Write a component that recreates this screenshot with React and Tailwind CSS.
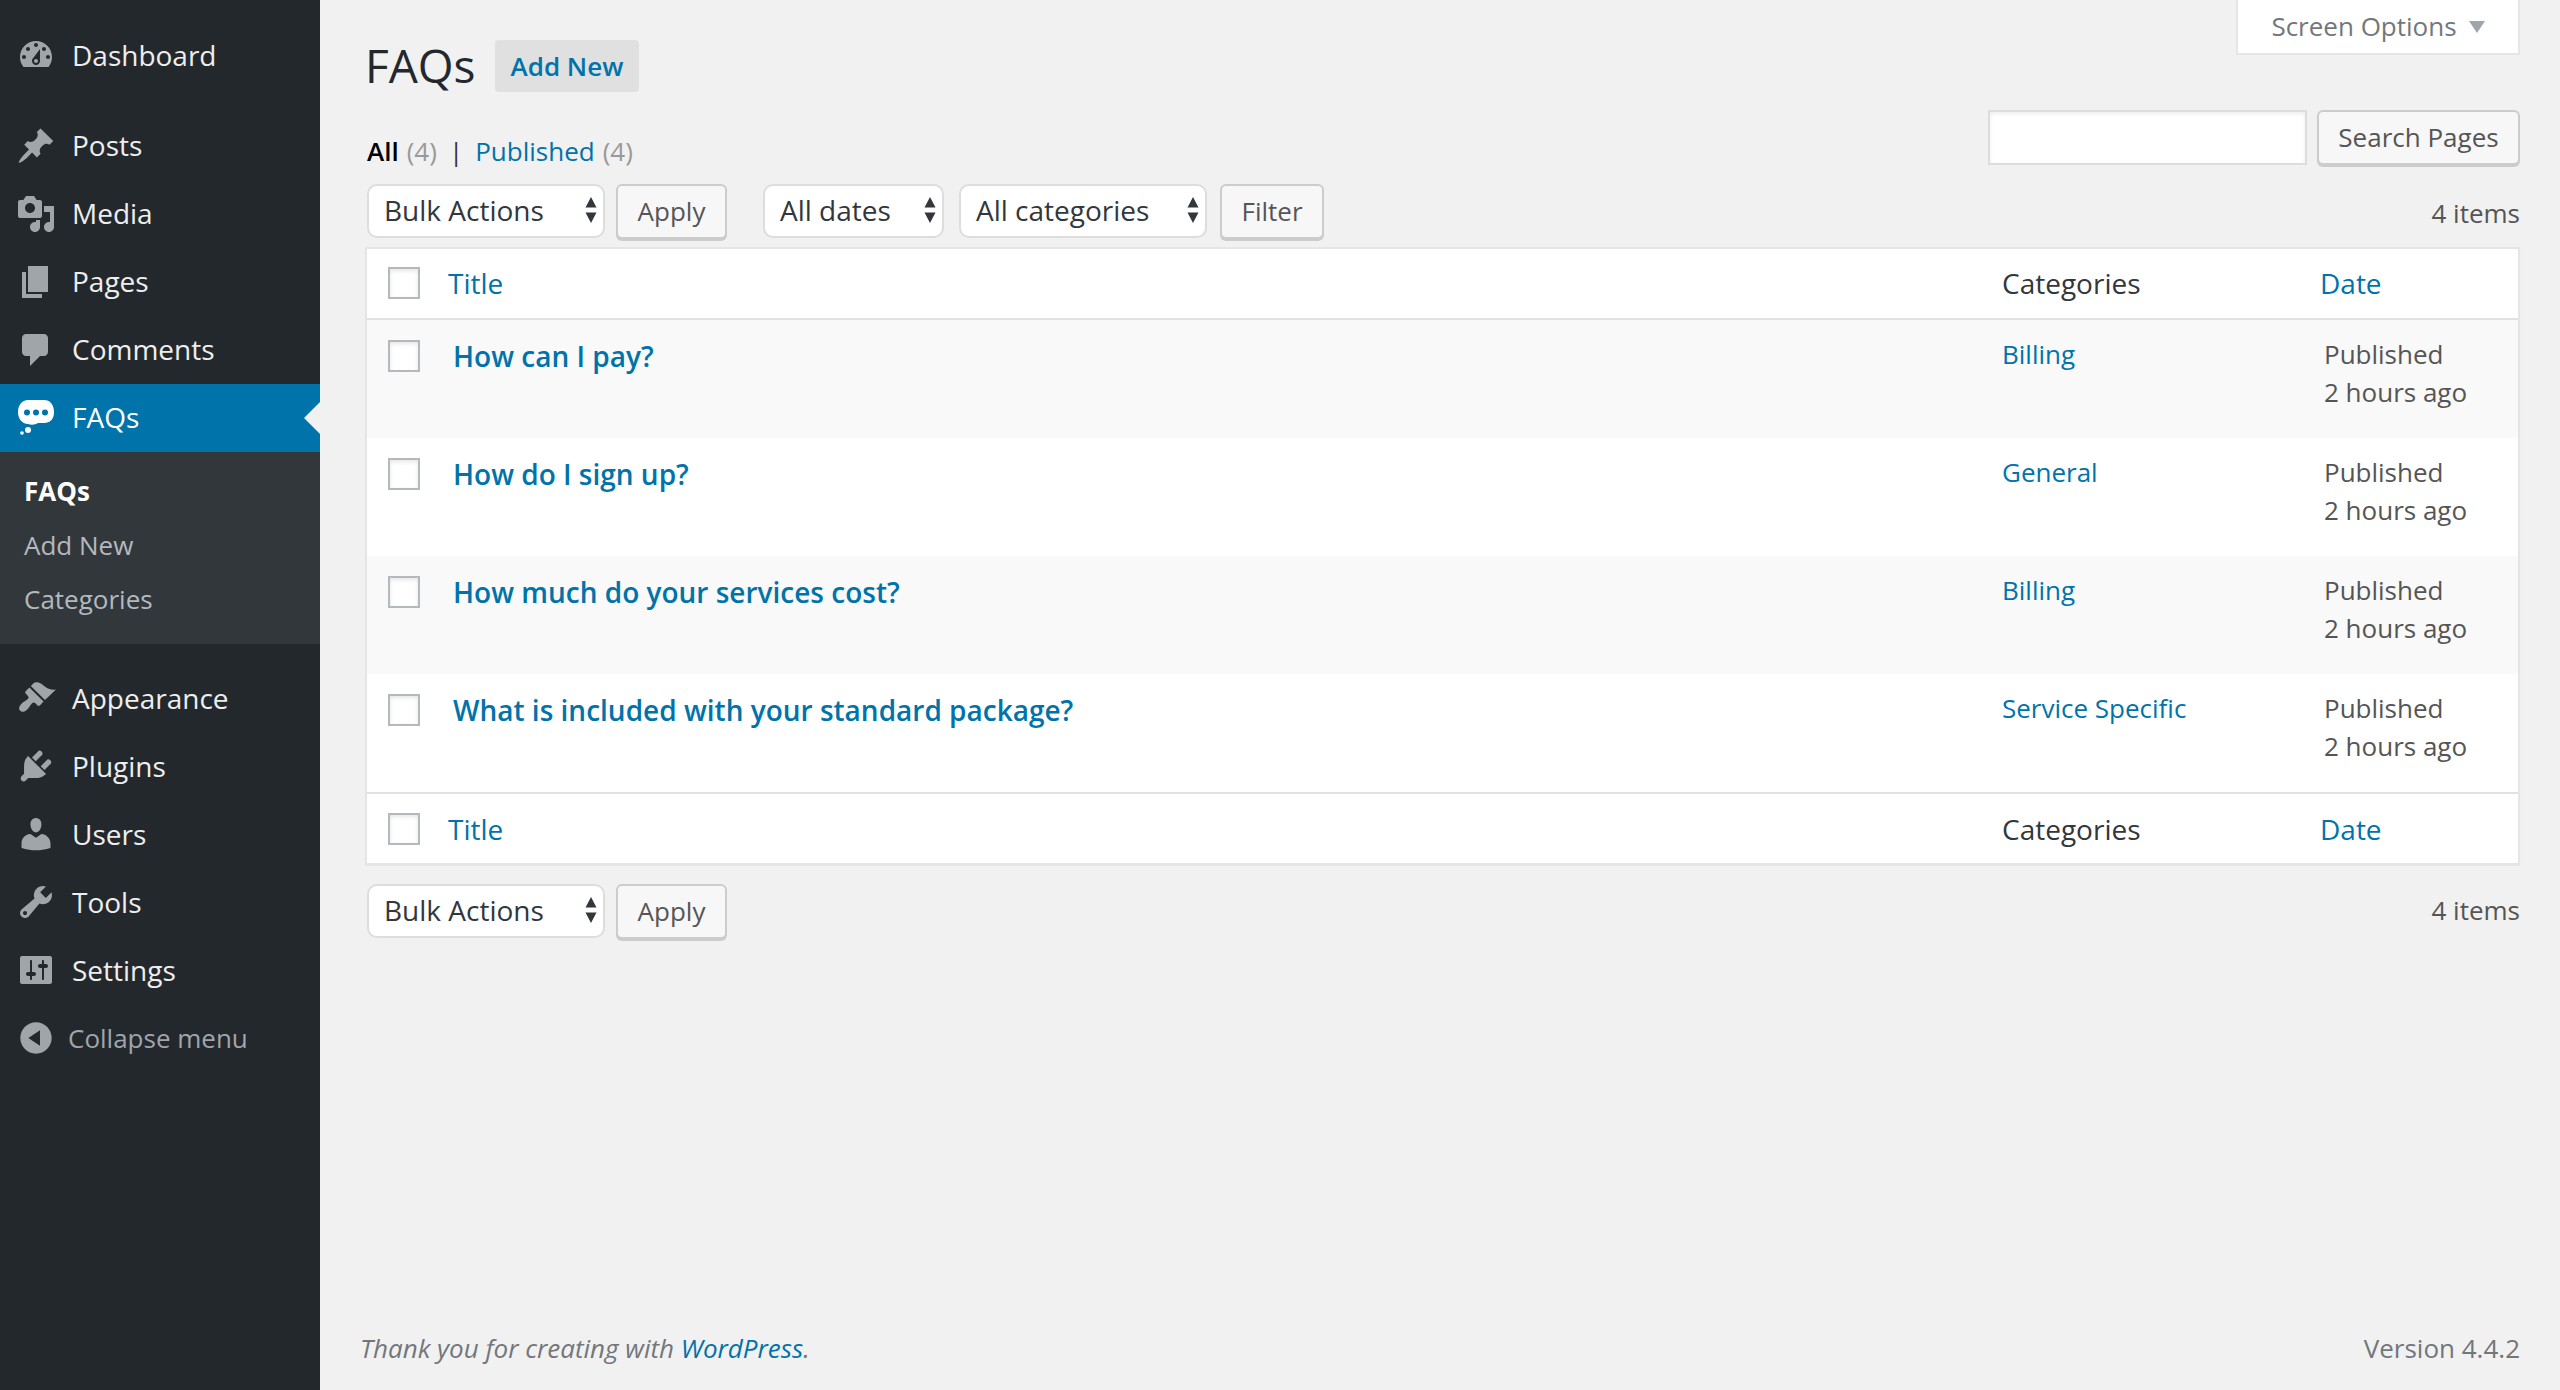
const ICONS = {
  dashboard:
    "M3.76 16h12.48c1.1-1.37 1.76-3.11 1.76-5 0-4.42-3.58-8-8-8s-8 3.58-8 8c0 1.89.66 3.63 1.76 5zM10 4c.55 0 1 .45 1 1s-.45 1-1 1-1-.45-1-1 .45-1 1-1zM6 6c.55 0 1 .45 1 1s-.45 1-1 1-1-.45-1-1 .45-1 1-1zm8 0c.55 0 1 .45 1 1s-.45 1-1 1-1-.45-1-1 .45-1 1-1zm-5.37 5.55L12 7v6c0 1.1-.9 2-2 2s-2-.9-2-2c0-.57.24-1.08.63-1.45zM4 10c.55 0 1 .45 1 1s-.45 1-1 1-1-.45-1-1 .45-1 1-1zm12 0c.55 0 1 .45 1 1s-.45 1-1 1-1-.45-1-1 .45-1 1-1zm-5 3c0-.55-.45-1-1-1s-1 .45-1 1 .45 1 1 1 1-.45 1-1z",
  posts:
    "M10.44 3.02l1.82-1.82 6.36 6.35-1.83 1.82c-1.05-.68-2.48-.57-3.41.36l-.75.75c-.92.93-1.04 2.35-.35 3.41l-1.83 1.82-2.41-2.41-2.8 2.79c-.42.42-3.38 2.71-3.8 2.29s1.86-3.39 2.28-3.81l2.79-2.79L4.1 9.36l1.83-1.82c1.05.69 2.48.57 3.4-.36l.75-.75c.93-.92 1.05-2.35.36-3.41z",
  media:
    "M13 11V4c0-.55-.45-1-1-1h-1.67L9 1H5L3.67 3H2c-.55 0-1 .45-1 1v7c0 .55.45 1 1 1h10c.55 0 1-.45 1-1zM7 4.5c1.38 0 2.5 1.12 2.5 2.5S8.38 9.5 7 9.5 4.5 8.38 4.5 7 5.62 4.5 7 4.5zM14 6h5v10.5c0 1.38-1.12 2.5-2.5 2.5S14 17.88 14 16.5s1.12-2.5 2.5-2.5c.17 0 .34.02.5.05V9h-3V6zm-4 8.05V13h2v3.5c0 1.38-1.12 2.5-2.5 2.5S7 17.88 7 16.5 8.12 14 9.5 14c.17 0 .34.02.5.05z",
  pages: "M6 15V2h10v13H6zm-1 1h8v2H3V5h2v11z",
  comments:
    "M5 2h9c1.1 0 2 .9 2 2v7c0 1.1-.9 2-2 2h-2l-5 5v-5H5c-1.1 0-2-.9-2-2V4c0-1.1.9-2 2-2z",
  appearance:
    "M14.48 11.06L7.41 3.99l1.5-1.5c.5-.56 2.3-.47 3.51.32 1.21.8 1.43 1.28 2.91 2.1 1.18.64 2.45 1.26 4.67.85l-5.52 5.3zm-.71.71L6.7 4.7 4.93 6.47c-.39.39-.39 1.02 0 1.41l1.06 1.06c.39.39.39 1.03 0 1.42-.6.6-1.43 1.11-2.21 1.69-.35.26-.7.53-1.01.84-1.43 1.43-1.4 2.8-.67 3.53s2.1.76 3.53-.67c.31-.31.58-.66.84-1.01.58-.78 1.09-1.61 1.69-2.21.39-.39 1.03-.39 1.42 0l1.06 1.06c.39.39 1.02.39 1.41 0z",
  plugins:
    "M13.11 4.36L9.87 7.6 8 5.73l3.24-3.24c.35-.34 1.05-.2 1.56.32.52.51.66 1.21.31 1.55zm-8 1.77l.91-1.12 9.01 9.01-1.19.84c-.71.71-2.63 1.16-3.82 1.16H6.14L4.9 17.26c-.59.59-1.54.59-2.12 0-.59-.58-.59-1.53 0-2.12l1.24-1.24v-3.88c0-1.13.4-3.19 1.09-3.89zm7.26 3.97l3.24-3.24c.34-.35 1.04-.21 1.55.31.52.51.66 1.21.31 1.55l-3.24 3.25z",
  users:
    "M10 9.25c-2.27 0-2.73-3.44-2.73-3.44C7 4.02 7.82 2 9.97 2c2.16 0 2.98 2.02 2.71 3.81 0 0-.41 3.44-2.68 3.44zm0 2.57L12.72 10c2.39 0 4.52 2.33 4.52 4.53v2.49s-3.65 1.13-7.24 1.13c-3.65 0-7.24-1.13-7.24-1.13v-2.49c0-2.25 1.94-4.48 4.47-4.48z",
  tools:
    "M16.68 9.77c-1.34 1.34-3.3 1.67-4.95.99l-5.41 6.52c-.99.99-2.59.99-3.58 0s-.99-2.59 0-3.57l6.52-5.42c-.68-1.65-.35-3.61.99-4.95 1.28-1.28 3.12-1.62 4.72-1.06l-2.89 2.89 2.82 2.82 2.86-2.87c.53 1.58.18 3.39-1.08 4.65zM3.81 16.21c.4.39 1.04.39 1.43 0 .4-.4.4-1.04 0-1.43-.39-.4-1.03-.4-1.43 0-.39.39-.39 1.03 0 1.43z",
  settings:
    "M18 16V4c0-.55-.45-1-1-1H3c-.55 0-1 .45-1 1v12c0 .55.45 1 1 1h14c.55 0 1-.45 1-1zM8 11h1c.55 0 1 .45 1 1s-.45 1-1 1H8v1.5c0 .28-.22.5-.5.5s-.5-.22-.5-.5V13H6c-.55 0-1-.45-1-1s.45-1 1-1h1V5.500c0-.28.22-.5.5-.5s.5.22.5.5V11zm5-2h-1c-.55 0-1-.45-1-1s.45-1 1-1h1V5.500c0-.28.22-.5.5-.5s.5.22.5.5V7h1c.55 0 1 .45 1 1s-.45 1-1 1h-1v5.500c0 .28-.22.5-.5.5s-.5-.22-.5-.5V9z",
  collapse:
    "M10 2.16c4.33 0 7.84 3.51 7.84 7.84s-3.51 7.84-7.84 7.84S2.16 14.33 2.16 10 5.71 2.16 10 2.16zm2 11.72V6.12L6.18 9.97z",
};

const MENU_TOP = [
  ["Posts", "posts"],
  ["Media", "media"],
  ["Pages", "pages"],
  ["Comments", "comments"],
];

const MENU_BOTTOM = [
  ["Appearance", "appearance"],
  ["Plugins", "plugins"],
  ["Users", "users"],
  ["Tools", "tools"],
  ["Settings", "settings"],
];

const ROWS = [
  { title: "How can I pay?", category: "Billing", bg: "bg-[#f9f9f9]" },
  { title: "How do I sign up?", category: "General", bg: "bg-white" },
  { title: "How much do your services cost?", category: "Billing", bg: "bg-[#f9f9f9]" },
  { title: "What is included with your standard package?", category: "Service Specific", bg: "bg-white" },
];

function Dashicon({ name }) {
  return (
    <svg viewBox="0 0 20 20" className="w-10 h-10 fill-[#a0a5aa] shrink-0">
      <path d={ICONS[name]} />
    </svg>
  );
}

function MenuItem({ label, icon, labelClass = "" }) {
  return (
    <div className="flex items-center h-[68px] pl-4 gap-4 text-[28px] text-[#eeeeee]">
      <Dashicon name={icon} />
      <span className={labelClass}>{label}</span>
    </div>
  );
}

function FaqIcon() {
  return (
    <svg viewBox="0 0 40 40" className="w-10 h-10 fill-white shrink-0">
      <path d="M12 2h16c6 0 10 4.500 10 12s-4 11-10 11h-6c-3 2-7 2-10 1-6-.5-10-5-10-12S6 2 12 2z" />
      <circle cx="11" cy="14.500" r="3" fill="#0073aa" />
      <circle cx="20" cy="14.500" r="3" fill="#0073aa" />
      <circle cx="29" cy="14.500" r="3" fill="#0073aa" />
      <circle cx="12" cy="32" r="3" />
      <circle cx="6" cy="35" r="1.800" />
    </svg>
  );
}

function Sidebar() {
  return (
    <aside className="w-[320px] shrink-0 bg-[#23282d] h-[1390px] overflow-hidden">
      <div className="flex items-center h-[112px] pb-[2px] pl-4 gap-4 text-[28px] text-[#eeeeee]">
        <Dashicon name="dashboard" />
        <span>Dashboard</span>
      </div>
      {MENU_TOP.map(([label, icon]) => (
        <MenuItem key={label} label={label} icon={icon} labelClass="mb-[3px]" />
      ))}
      <div className="relative flex items-center h-[68px] pl-4 gap-4 text-[28px] text-white bg-[#0073aa]">
        <FaqIcon />
        <span className="mb-[3px]">FAQs</span>
        <div className="absolute right-0 top-[18px] border-y-[16px] border-r-[16px] border-y-transparent border-r-[#f1f1f1]" />
      </div>
      <div className="bg-[#32373c] h-[192px] pt-3 pl-6 text-[26px] text-[#b4b9be]">
        <div className="h-[54px] leading-[54px] font-bold text-white">FAQs</div>
        <div className="h-[54px] leading-[54px]">Add New</div>
        <div className="h-[54px] leading-[54px]">Categories</div>
      </div>
      <div className="mt-5">
        {MENU_BOTTOM.map(([label, icon]) => (
          <MenuItem key={label} label={label} icon={icon} />
        ))}
      </div>
      <div className="flex items-center h-[68px] pl-4 gap-3 text-[26px] text-[#a0a5aa]">
        <Dashicon name="collapse" />
        <span>Collapse menu</span>
      </div>
    </aside>
  );
}

function SelectBox({ label, width }) {
  return (
    <div className={`flex items-center justify-between h-[54px] ${width} pl-[15px] pr-[6px] pb-[2px] bg-white border-2 border-[#dddddd] rounded-[10px] text-[28px] text-[#32373c]`}>
      <span>{label}</span>
      <svg viewBox="0 0 12 26" className="w-3 h-[26px] fill-[#32373c]">
        <path d="M6 0l5.500 10.500H.5zM6 26L.5 15.500h11z" />
      </svg>
    </div>
  );
}

function WpButton({ children, width, className = "" }) {
  return (
    <div className={`flex items-center justify-center h-[55px] ${width} pb-[1px] bg-[#f7f7f7] border-2 border-[#cccccc] rounded-[6px] shadow-[0_2px_0_#cccccc] text-[26px] text-[#555555] ${className}`}>
      {children}
    </div>
  );
}

function CheckBox() {
  return <div className="w-8 h-8 bg-white border-2 border-[#b4b9be] shadow-[inset_0_2px_4px_rgba(0,0,0,0.1)] shrink-0" />;
}

function HeadRow({ border }) {
  return (
    <div className={`flex items-center h-[71px] pl-[21px] text-[28px] ${border}`}>
      <CheckBox />
      <a className="ml-[28px] w-[1554px] text-[#0073aa]">Title</a>
      <span className="w-[318px] text-[#32373c]">Categories</span>
      <a className="text-[#0073aa]">Date</a>
    </div>
  );
}

function Row({ title, category, bg }) {
  return (
    <div className={`flex h-[118px] pl-[21px] pt-5 text-[28px] ${bg}`}>
      <CheckBox />
      <a className="ml-[33px] w-[1549px] -mt-[5px] h-[40px] font-semibold text-[#0073aa]">{title}</a>
      <a className="w-[322px] -mt-[5px] h-[40px] text-[26px] text-[#0073aa]">{category}</a>
      <div className="-mt-[5px] text-[26px] leading-[38px] text-[#555555]">
        Published
        <br />
        2 hours ago
      </div>
    </div>
  );
}

export default function App() {
  return (
    <div className="flex h-[1390px] overflow-hidden bg-[#f1f1f1] font-['Open_Sans',sans-serif]">
      <Sidebar />
      <main className="flex-1 flex flex-col pl-[45px] pr-[40px]">
        <div className="flex items-start h-[92px]">
          <h1 className="mt-[36px] text-[46px] leading-[58px] font-normal text-[#23282d]">FAQs</h1>
          <div className="ml-[19px] mt-10 h-[52px] px-4 flex items-center bg-[#e0e0e0] rounded-[4px] text-[26px] font-semibold text-[#0073aa]">
            Add New
          </div>
          <div className="ml-auto flex items-center justify-center gap-3 w-[284px] h-[55px] bg-white border-x-2 border-b-2 border-[#e5e5e5] text-[26px] text-[#72777c]">
            Screen Options
            <span className="w-0 h-0 border-x-[8px] border-t-[12px] border-x-transparent border-t-[#a0a5aa]" />
          </div>
        </div>
        <div className="flex items-start justify-between h-[57px] mt-[18px]">
          <div className="mt-[22px] ml-[2px] text-[26px] text-[#32373c] flex items-center">
            <span className="font-semibold text-black">All</span>
            <span className="ml-2 text-[#999999]">(4)</span>
            <span className="mx-3 text-[#32373c]">|</span>
            <a className="text-[#0073aa]">Published</a>
            <span className="ml-2 text-[#999999]">(4)</span>
          </div>
          <div className="flex gap-[10px]">
            <div className="w-[319px] h-[55px] bg-white border-2 border-[#dddddd] shadow-[inset_0_2px_4px_rgba(0,0,0,0.07)]" />
            <WpButton width="w-[203px]">Search Pages</WpButton>
          </div>
        </div>
        <div className="flex items-start h-[63px] mt-[17px]">
          <div className="ml-[2px]">
            <SelectBox label="Bulk Actions" width="w-[238px]" />
          </div>
          <WpButton width="w-[111px]" className="ml-[11px]">Apply</WpButton>
          <div className="ml-9">
            <SelectBox label="All dates" width="w-[181px]" />
          </div>
          <div className="ml-[15px]">
            <SelectBox label="All categories" width="w-[248px]" />
          </div>
          <WpButton width="w-[104px]" className="ml-[13px]">Filter</WpButton>
          <span className="ml-auto mt-[10px] text-[26px] text-[#555555]">4 items</span>
        </div>
        <div className="bg-white border-2 border-[#e5e5e5] shadow-[0_1px_1px_rgba(0,0,0,0.04)]">
          <HeadRow border="border-b-2 border-[#e1e1e1] pb-[2px]" />
          {ROWS.map((row) => (
            <Row key={row.title} {...row} />
          ))}
          <HeadRow border="border-t-2 border-[#e1e1e1]" />
        </div>
        <div className="flex items-start mt-[19px]">
          <div className="ml-[2px]">
            <SelectBox label="Bulk Actions" width="w-[238px]" />
          </div>
          <WpButton width="w-[111px]" className="ml-[11px]">Apply</WpButton>
          <span className="ml-auto mt-[7px] text-[26px] text-[#555555]">4 items</span>
        </div>
        <footer className="mt-auto mb-[22px] -ml-[5px] flex justify-between text-[26px] text-[#72777c]">
          <span className="italic">
            Thank you for creating with <a className="text-[#0073aa]">WordPress</a>.
          </span>
          <span>Version 4.4.2</span>
        </footer>
      </main>
    </div>
  );
}
